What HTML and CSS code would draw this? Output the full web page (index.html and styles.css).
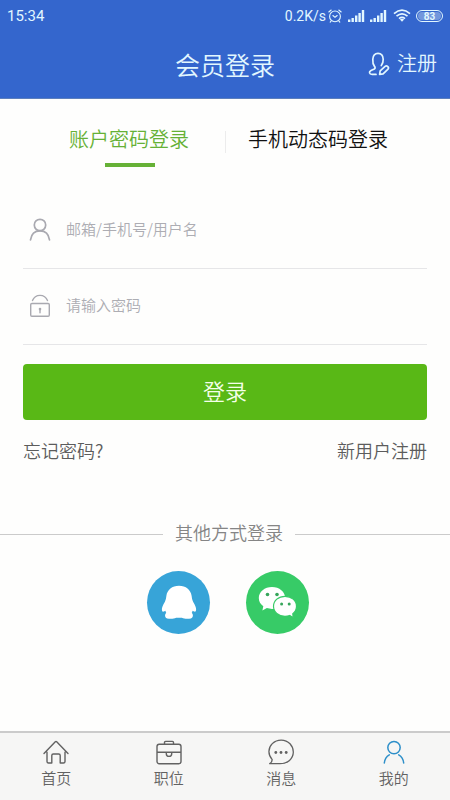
FILE: index.html
```html
<!DOCTYPE html>
<html lang="zh-CN">
<head>
<meta charset="utf-8">
<meta name="viewport" content="width=device-width, initial-scale=1">
<title>会员登录</title>
<link rel="stylesheet" href="styles.css">
</head>
<body>
<div class="app">
  <header class="top">
    <div class="status">
      <span class="clock">15:34</span>
      <span class="speed">0.2K/s</span>
      <svg class="alarm" width="14" height="14" viewBox="0 0 14 14" fill="none" stroke="currentColor" stroke-width="1.1" stroke-linecap="round"><circle cx="7" cy="7.4" r="5.4"/><path d="M.8 3 3.2 1M13.2 3 10.8 1M4.9 6.5 7 8.3l2.2-1.8M3.2 11.8l-1 1.3M10.8 11.8l1 1.3"/></svg>
      <svg class="signal" width="17" height="12" viewBox="0 0 17 12" fill="currentColor"><path d="M0 9.5h2.4V12H0zM3.5 8h2.4v4H3.5zM7 5.5h2.4V12H7zM10.4 3h2.4v9h-2.4zM13.8 0h2.4v12h-2.4z"/></svg>
      <svg class="signal second" width="17" height="12" viewBox="0 0 17 12" fill="currentColor"><path d="M0 9.5h2.4V12H0zM3.5 8h2.4v4H3.5zM7 5.5h2.4V12H7zM10.4 3h2.4v9h-2.4zM13.8 0h2.4v12h-2.4z"/></svg>
      <svg class="wifi" width="18" height="13" viewBox="0 0 18 13" fill="none" stroke="currentColor" stroke-width="1.7"><path d="M1 4.6q8-6.8 16 0M3.5 7.2q5.5-4.7 11 0M6 9.6q3-2.5 6 0"/><path d="M6.9 10.5q2.1-1.4 4.2 0L9 12.8z" fill="currentColor" stroke="none"/></svg>
      <span class="battery"><span class="level">83</span></span>
    </div>
    <div class="bar">
      <h1>会员登录</h1>
      <a class="register">
        <svg width="22" height="24" viewBox="0 0 22 24" fill="none" stroke="currentColor" stroke-width="1.7" stroke-linecap="round" stroke-linejoin="round"><path d="M8 22.400H4.200C1 22.200.7 19.700 3 18.500l3.300-1.500q1.500-1 .2-2.600C5 12.500 4.600 10 4.800 7.200 5.100 3.200 7 1.300 10 1.300s5 1.900 5.200 5.900c.1 2.800-.6 4.700-1.900 6.400"/><path d="m11.600 22.300.6-3.400 4.900-4.500q1.300-1 2.400 0l.5.500q1 1.200 0 2.300l-4.900 4.600z"/></svg>
        <span>注册</span>
      </a>
    </div>
  </header>

  <main>
    <nav class="modes">
      <a class="mode active">账户密码登录</a>
      <i class="split"></i>
      <a class="mode">手机动态码登录</a>
    </nav>

    <form class="form">
      <label class="field">
        <svg width="22" height="24" viewBox="0 0 22 24" fill="none" stroke="currentColor" stroke-width="1.7" stroke-linecap="round"><circle cx="11" cy="7" r="5.7"/><path d="M1.500 21.800C2.300 16 6 12.800 11 12.800s8.700 3.200 9.500 9"/></svg>
        <input type="text" placeholder="邮箱/手机号/用户名">
      </label>
      <label class="field">
        <svg width="22" height="24" viewBox="0 0 22 24" fill="none" stroke="currentColor" stroke-width="1.4" stroke-linecap="round"><rect x="1.700" y="9.500" width="18.600" height="12.700" rx="1.200"/><path d="M3.500 6.600C6.200-.4 15.800-.4 18.500 6.600M11 15.900v2.800"/><circle cx="11" cy="15.100" r="1.300" fill="currentColor" stroke="none"/></svg>
        <input type="password" placeholder="请输入密码">
      </label>
      <button type="button" class="submit">登录</button>
      <div class="links"><a>忘记密码?</a><a>新用户注册</a></div>
    </form>

    <div class="other"><span>其他方式登录</span></div>
    <div class="social">
      <a class="qq"><svg width="63" height="63" viewBox="0 0 63 63" fill="currentColor"><path d="M32 14.800c-7 0-11.600 4-12.600 10-.4 2.300-.5 4-1.600 6.100-1.600 2.900-3.300 5.500-2.900 8.100.3 1.700 1 2 2 1.600l1.600-.9c.1 1 .3 1.600.8 2.400-1.900 1.400-1.500 4.700.8 5.300 2.900.6 6.700.6 9-.7h5.800c2.300 1.300 6.100 1.300 9 .7 2.300-.6 2.700-3.900.8-5.300.5-.8.7-1.400.8-2.400l1.600.9c1 .4 1.700.1 2-1.600.4-2.600-1.300-5.200-2.900-8.100-1.100-2.100-1.200-3.800-1.600-6.100-1-6-5.600-10-12.600-10z"/></svg></a>
      <a class="wechat"><svg width="63" height="63" viewBox="0 0 63 63"><path fill="#fff" d="M26 16c-7.300 0-13.200 4.800-13.200 11 0 3.500 1.700 6.200 4.500 8.200l-.9 4.400 4.500-2.500c1.500.5 3.500.8 5.100.8 7.300 0 13.200-4.800 13.200-10.900S33.300 16 26 16z"/><path fill="#fff" stroke="#37cb67" stroke-width="1.200" d="M39 25.300c-6.500 0-11.500 4.300-11.500 10s5 10 11.500 10c1.700 0 3.300-.3 4.700-.8l3.500 2.300-.4-4c2.400-1.800 3.700-4.500 3.700-7.500 0-5.700-5-10-11.500-10z"/><g fill="#37a65c"><circle cx="21.500" cy="23.500" r="1.800"/><circle cx="31" cy="23.500" r="1.800"/><circle cx="35.600" cy="33" r="1.500"/><circle cx="43.200" cy="33" r="1.500"/></g></svg></a>
    </div>
  </main>

  <nav class="tabs">
    <a class="tab"><svg width="26" height="26" viewBox="0 0 26 26" fill="none" stroke="currentColor" stroke-width="1.400" stroke-linecap="round" stroke-linejoin="round"><path d="M1 14.600 12.300 2.800q.7-.7 1.400 0L25 14.600M4 13.300v9.200q0 1.500 1.500 1.500h3.300v-7.500q0-1.500 1.500-1.500h5.400q1.500 0 1.500 1.500V24h3.300q1.500 0 1.500-1.500v-9.200"/></svg><span>首页</span></a>
    <a class="tab"><svg width="26" height="26" viewBox="0 0 26 26" fill="none" stroke="currentColor" stroke-width="1.400" stroke-linejoin="round"><rect x="1" y="5.200" width="24" height="19.500" rx="2.200"/><path d="M8.500 5V3.400q0-1 1-1h7q1 0 1 1V5M1 13.200h24M10.300 13.400v1.300a2.700 2.700 0 0 0 5.400 0v-1.300"/></svg><span>职位</span></a>
    <a class="tab"><svg width="26" height="26" viewBox="0 0 26 26" fill="none" stroke="currentColor" stroke-width="1.300" stroke-linejoin="round"><path d="M1.700 24.700q2.200-1 2.500-4.100C-.3 15.800-.1 9 4.300 4.600c5-4.800 13-4.700 17.700.2 4.600 4.900 4.400 12.200-.5 16.600-3.200 2.900-6 3.300-9.500 3.300z"/><g fill="currentColor" stroke="none"><circle cx="7.800" cy="13.500" r="1.400"/><circle cx="13" cy="13.500" r="1.400"/><circle cx="18.200" cy="13.500" r="1.400"/></g></svg><span>消息</span></a>
    <a class="tab current"><svg width="26" height="26" viewBox="0 0 26 26" fill="none" stroke="currentColor" stroke-width="1.500" stroke-linecap="round"><circle cx="13" cy="8.600" r="6.200"/><path d="M3.300 24c.4-3.600 1.900-6.400 5-8.200M17.700 15.800c2.900 1.600 4.600 4.400 5 8.200"/></svg><span>我的</span></a>
  </nav>
</div>
</body>
</html>
```
FILE: styles.css
```css
* { box-sizing: border-box; }
body {
  margin: 0;
  font-family: "Noto Sans CJK SC", sans-serif;
  font-weight: 350;
  background: #fefefd;
}
svg { display: block; flex: none; }
.app { height: 800px; display: flex; flex-direction: column; overflow: hidden; }

.top { height: 99px; border-bottom: 1px solid #5c7fbd; background: #3466cd; color: #e2f7ff; flex: none; }
.status {
  height: 31px;
  display: flex;
  align-items: center;
  padding: 0 7px;
  font: 400 14px/30px Roboto, sans-serif;
}
.clock { margin-right: auto; font-size: 15px; }
.speed { margin-right: 2px; }
.alarm { margin-right: 6px; }
.signal { margin-right: 5px; }
.signal.second { margin-right: 6px; }
.wifi { margin-right: 5px; }
.battery {
  width: 27px;
  height: 12px;
  border: 1px solid currentColor;
  border-radius: 6px;
  padding: 1px;
  display: flex;
}
.level {
  flex: 1;
  border-radius: 4px;
  background: #7397dc;
  font: 700 10px/9px Roboto, sans-serif;
  text-align: center;
}
.bar {
  height: 65px;
  display: grid;
  grid-template-columns: 1fr auto 1fr;
  align-items: center;
  padding: 0 13px;
}
.bar h1 { grid-column: 2; margin: 0; font-size: 25px; font-weight: 350; line-height: 36px; }
.register {
  justify-self: end;
  display: flex;
  align-items: center;
  gap: 7px;
  font-size: 20px;
  line-height: 28px;
}
.register span { margin-top: -2px; }

main { flex: 1; }
.modes {
  height: 94px;
  display: grid;
  grid-template-columns: 225px 1px 224px;
  padding-top: 25px;
}
.mode { font-size: 20px; line-height: 30px; color: #111; padding-left: 22px; }
.mode.active { color: #66b136; padding-left: 69px; }
.mode.active::after {
  content: "";
  display: block;
  width: 50px;
  height: 4px;
  margin: 9px 0 0 36px;
  background: #66b136;
}
.split { height: 22px; margin-top: 7px; background: #ececec; }

.form { padding: 0 23px; }
.field {
  height: 76px;
  display: flex;
  align-items: center;
  gap: 15px;
  padding: 0 0 2px 6px;
  border-bottom: 1px solid #e6e6e8;
  color: #a9a9b0;
}
.field input {
  flex: 1;
  min-width: 0;
  height: 30px;
  border: 0;
  padding: 0 0 2px;
  background: none;
  font: inherit;
  font-size: 15px;
  color: #444;
}
.field input::placeholder { color: #adadb3; opacity: 1; }
.submit {
  display: block;
  width: 100%;
  height: 56px;
  margin-top: 19px;
  padding: 0 0 4px;
  border: 0;
  border-radius: 4px;
  background: #59b816;
  color: #f4ffe8;
  font: inherit;
  font-size: 22px;
}
.links {
  display: flex;
  justify-content: space-between;
  margin-top: 17px;
  font-size: 18px;
  line-height: 26px;
  color: #5c5c5c;
}
.other {
  display: flex;
  align-items: center;
  gap: 12px;
  margin-top: 57px;
  font-size: 18px;
  line-height: 28px;
  color: #858585;
}
.other span { margin: -2px 0 2px; }
.other::before, .other::after { content: ""; flex: 1; height: 1px; background: #cbcbcb; }
.other::before { flex: none; width: 163px; }
.social { display: flex; gap: 36px; margin: 23px 0 0 147px; }
.social a { width: 63px; height: 63px; border-radius: 50%; color: #fff; }
.qq { background: #37a4d8; }
.wechat { background: #37cb67; }

.tabs {
  height: 69px;
  flex: none;
  display: grid;
  grid-template-columns: repeat(4, 1fr);
  border-top: 2px solid #cbcbcb;
  background: #f6f6f5;
  color: #626262;
}
.tab { display: flex; flex-direction: column; align-items: center; padding-top: 6px; }
.tab span { font-size: 15px; line-height: 22px; margin-top: 2px; }
.current svg { color: #2d8fc9; }
```
